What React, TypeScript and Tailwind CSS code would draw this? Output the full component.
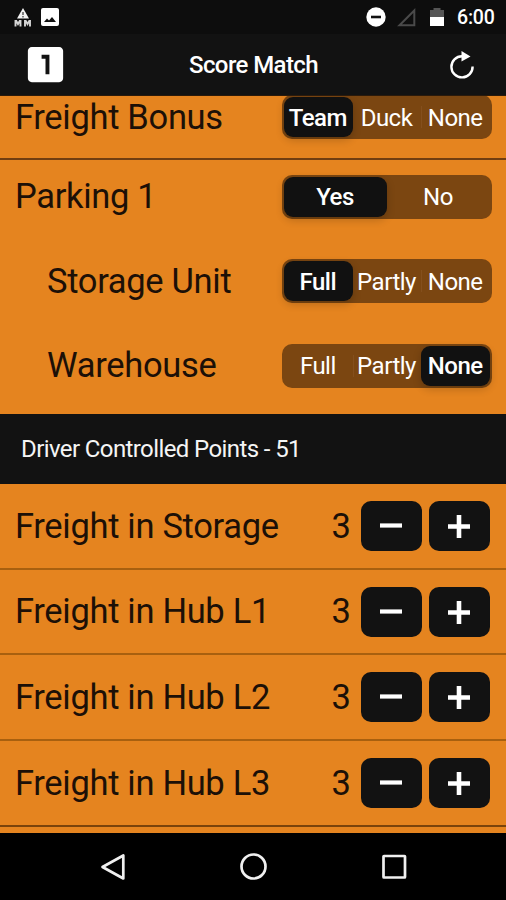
import { useState } from "react";
import clsx from "clsx";
import { MdLooksOne } from "react-icons/md";

interface ISegmentedProps {
    options: string[];
    initial: string;
}

interface ICounterRowProps {
    label: string;
    last?: boolean;
}

const COUNTERS = [
    "Freight in Storage",
    "Freight in Hub L1",
    "Freight in Hub L2",
    "Freight in Hub L3",
];

function StatusBar() {
    return (
        <div className="flex h-[34px] shrink-0 items-center bg-[#0d0d0d] pl-[14px] pr-[11px] text-white">
            <svg width="18" height="20" viewBox="0 0 18 20" fill="none">
                <path d="M9 1 15 11.5H3z" fill="#f2f2f2" />
                <path d="M9 5v3M9 9v1.5" stroke="#333" strokeWidth="1.2" />
                <path
                    d="M1.5 19.5v-6.5M6.5 19.5v-6.5M11 19.5v-6.5M16 19.5v-6.5M2 13.5l2 3.5 2-3.5M11.5 13.5l2 3.5 2-3.5"
                    stroke="#d5d5d5"
                    strokeWidth="1.9"
                />
            </svg>
            <svg className="ml-[9px]" width="18" height="18" viewBox="0 0 18 18">
                <rect width="18" height="18" rx="2" fill="#fff" />
                <path d="M3 14 6 10.5l2 2L11 9l4 5z" fill="#111" />
            </svg>
            <div className="flex-1" />
            <svg width="20" height="20" viewBox="0 0 20 20">
                <circle cx="10" cy="10" r="9.7" fill="#fff" />
                <path d="M5 10h10" stroke="#111" strokeWidth="2.6" />
            </svg>
            <svg className="ml-[11px]" width="19" height="19" viewBox="0 0 19 19">
                <path
                    d="M2.5 17.3H17.3V2.5z"
                    fill="none"
                    stroke="#4a4a4a"
                    strokeWidth="2"
                />
            </svg>
            <svg className="ml-[14px]" width="14" height="20" viewBox="0 0 14 20">
                <path d="M3.5 1h7v2H14v7H0V3h3.5z" fill="#555" />
                <path d="M0 10h14v9H0z" fill="#fff" />
            </svg>
            <span className="mt-[2px] ml-[13px] w-[38px] whitespace-nowrap text-[19.5px] font-medium leading-none tracking-[-0.2px]">
                6:00
            </span>
        </div>
    );
}

function Header() {
    return (
        <header className="flex h-[61px] shrink-0 items-center bg-[#121212] pl-[22px] pr-[31px] text-white">
            <MdLooksOne className="size-[47px] shrink-0" />
            <h1 className="mt-px ml-[120px] flex-1 text-[24px] font-medium leading-none tracking-[-0.6px]">
                Score Match
            </h1>
            <svg width="25" height="28" viewBox="0 0 25 28" fill="none">
                <path
                    d="M12 5.2A10.6 10.6 0 1 0 22.6 15.5"
                    stroke="#fff"
                    strokeWidth="2.4"
                />
                <path d="M11.5 0 20.500 5.5 11.5 10.5z" fill="#fff" />
            </svg>
        </header>
    );
}

function Segmented({ options, initial }: ISegmentedProps) {
    const [selected, setSelected] = useState(initial);
    const selectedIndex = options.indexOf(selected);

    return (
        <div className="flex h-[44px] w-[210px] shrink-0 rounded-[10px] bg-[#7b4611] p-[2px]">
            {options.map((option, index) => (
                <button
                    key={option}
                    type="button"
                    onClick={() => setSelected(option)}
                    className={clsx(
                        "flex min-w-0 flex-1 items-center justify-center whitespace-nowrap pt-px pr-px text-[24px] leading-none tracking-[-0.5px] text-white",
                        option === selected &&
                            "rounded-[9px] bg-[#111] font-medium shadow-[0_3px_8px_rgba(0,0,0,0.2)]",
                        // le séparateur disparaît à côté de l'option choisie
                        index > 0 &&
                            index !== selectedIndex &&
                            index - 1 !== selectedIndex &&
                            "bg-linear-to-r from-[#844f1d] from-[1px] to-transparent to-[1px] bg-[length:100%_22px] bg-center bg-no-repeat",
                    )}
                >
                    {option}
                </button>
            ))}
        </div>
    );
}

function CounterRow({ label, last }: ICounterRowProps) {
    const [count, setCount] = useState(3);

    return (
        <div
            className={clsx(
                "flex h-[85.7px] items-center border-b-2 pl-[15px] pr-[16px]",
                last ? "border-[#7a430b]" : "border-[#a8600f]",
            )}
        >
            <span className="flex-1 text-[34.5px] leading-none tracking-[-0.32px]">
                {label}
            </span>
            <span className="mr-[10px] text-[34.5px] leading-none">{count}</span>
            <button
                type="button"
                aria-label="Moins"
                onClick={() => setCount(Math.max(0, count - 1))}
                className="mr-[7px] flex h-[50px] w-[61px] items-center justify-center rounded-[10px] bg-[#121212]"
            >
                <svg width="24" height="24" viewBox="0 0 24 24">
                    <path d="M0 11.5h22" stroke="#fff" strokeWidth="4.2" />
                </svg>
            </button>
            <button
                type="button"
                aria-label="Plus"
                onClick={() => setCount(count + 1)}
                className="flex h-[50px] w-[61px] items-center justify-center rounded-[10px] bg-[#121212]"
            >
                <svg width="24" height="24" viewBox="0 0 24 24">
                    <path d="M0 12.5h22M11 1v23" stroke="#fff" strokeWidth="4.6" />
                </svg>
            </button>
        </div>
    );
}

function NavigationBar() {
    return (
        <nav className="flex h-[67px] shrink-0 items-center justify-between bg-black pl-[99px] pr-[98px]">
            <svg width="27" height="30" viewBox="0 0 27 30" fill="none">
                <path
                    d="M3.5 15 24.3 3.5V26.5z"
                    stroke="#f0f0f0"
                    strokeWidth="2.7"
                    strokeLinejoin="round"
                />
            </svg>
            <svg width="28" height="28" viewBox="0 0 28 28" fill="none">
                <circle cx="14.500" cy="13.500" r="12" stroke="#f0f0f0" strokeWidth="2.7" />
            </svg>
            <svg width="28" height="28" viewBox="0 0 28 28" fill="none">
                <rect
                    x="3.5"
                    y="3"
                    width="21.5"
                    height="21.5"
                    rx="0.5"
                    stroke="#f0f0f0"
                    strokeWidth="2.7"
                />
            </svg>
        </nav>
    );
}

function App() {
    return (
        <div className="flex h-[900px] w-[506px] flex-col overflow-hidden bg-black font-['Roboto',sans-serif]">
            <StatusBar />
            <Header />
            <main className="min-h-0 flex-1 overflow-hidden border-t border-[#2b1a0b] bg-[#e5841f] text-[#1c1007]">
                <div className="flex h-[64px] items-start justify-between border-b-2 border-[#713e10] pl-[15px] pr-[14px]">
                    <span className="mt-[4px] text-[34.5px] leading-none tracking-[-0.32px]">
                        Freight Bonus
                    </span>
                    <div className="-mt-px">
                        <Segmented options={["Team", "Duck", "None"]} initial="Team" />
                    </div>
                </div>
                <div className="flex flex-col gap-[40.5px] pt-[14.5px] pr-[14px] pb-[26.5px] pl-[15px]">
                    <div className="flex items-center justify-between">
                        <span className="text-[34.5px] leading-none tracking-[-0.32px]">
                            Parking 1
                        </span>
                        <Segmented options={["Yes", "No"]} initial="Yes" />
                    </div>
                    <div className="flex items-center justify-between pl-[32px]">
                        <span className="text-[34.5px] leading-none tracking-[-0.32px]">
                            Storage Unit
                        </span>
                        <Segmented options={["Full", "Partly", "None"]} initial="Full" />
                    </div>
                    <div className="flex items-center justify-between pl-[32px]">
                        <span className="text-[34.5px] leading-none tracking-[-0.32px]">
                            Warehouse
                        </span>
                        <Segmented options={["Full", "Partly", "None"]} initial="None" />
                    </div>
                </div>
                <h2 className="flex h-[70px] items-center bg-[#121212] pl-[21px] text-[24px] leading-none tracking-[-0.6px] text-[#f5f5f5]">
                    Driver Controlled Points - 51
                </h2>
                {COUNTERS.map((label, index) => (
                    <CounterRow
                        key={label}
                        label={label}
                        last={index === COUNTERS.length - 1}
                    />
                ))}
            </main>
            <NavigationBar />
        </div>
    );
}

export default App;
